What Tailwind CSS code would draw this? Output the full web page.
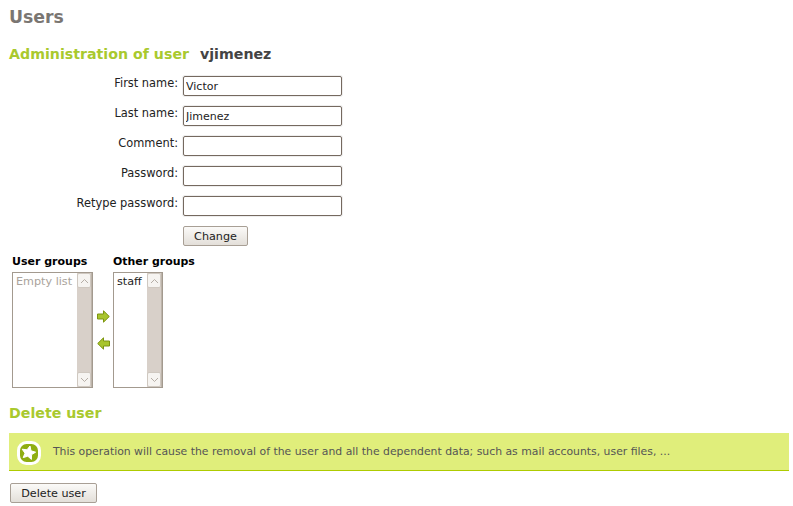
<!DOCTYPE html>
<html lang="en">
<head>
  <meta charset="UTF-8" />
  <title>Users</title>
  <script src="https://cdn.jsdelivr.net/npm/@tailwindcss/browser@4"></script>
</head>
<body class="bg-white font-['DejaVu_Sans',sans-serif] text-[11px] text-[#333] overflow-hidden">
  <div class="w-[793px] h-[506px] pl-[9px] pr-[4px] pt-[6px]">
    <h1 class="text-[17.3px] leading-[22px] font-bold text-[#7a7672]">Users</h1>

    <!-- Administration -->
    <h2 class="mt-[17px] h-[18px] flex items-center gap-[11px] text-[14.2px] leading-[18px] font-bold text-[#a9c92e]">
      <span>Administration of user</span><span class="text-[#444]">vjimenez</span>
    </h2>

    <form class="mt-[13px] ml-[-9px] flex flex-col gap-[10px]">
      <div class="flex items-start gap-[5px]">
        <label class="w-[178px] text-right text-[11.4px] leading-[14px] text-[#222]">First name:</label>
        <input value="Victor" class="w-[159px] h-[20px] bg-white border border-[#75695f] rounded-[2px] px-[2px] text-[11px] text-[#222] shadow-[0_0_0_1px_#eee]" />
      </div>
      <div class="flex items-start gap-[5px]">
        <label class="w-[178px] text-right text-[11.4px] leading-[14px] text-[#222]">Last name:</label>
        <input value="Jimenez" class="w-[159px] h-[20px] bg-white border border-[#75695f] rounded-[2px] px-[2px] text-[11px] text-[#222] shadow-[0_0_0_1px_#eee]" />
      </div>
      <div class="flex items-start gap-[5px]">
        <label class="w-[178px] text-right text-[11.4px] leading-[14px] text-[#222]">Comment:</label>
        <input class="w-[159px] h-[20px] bg-white border border-[#75695f] rounded-[2px] px-[2px] shadow-[0_0_0_1px_#eee]" />
      </div>
      <div class="flex items-start gap-[5px]">
        <label class="w-[178px] text-right text-[11.4px] leading-[14px] text-[#222]">Password:</label>
        <input type="password" class="w-[159px] h-[20px] bg-white border border-[#75695f] rounded-[2px] px-[2px] shadow-[0_0_0_1px_#eee]" />
      </div>
      <div class="flex items-start gap-[5px]">
        <label class="w-[178px] text-right text-[11.4px] leading-[14px] text-[#222]">Retype password:</label>
        <input type="password" class="w-[159px] h-[20px] bg-white border border-[#75695f] rounded-[2px] px-[2px] shadow-[0_0_0_1px_#eee]" />
      </div>
      <div class="pl-[183px]">
        <button type="button" class="w-[65px] h-[20px] pt-[2px] border border-[#a89f95] rounded-[2px] bg-gradient-to-b from-[#fbfaf8] to-[#e3dfd9] text-[11.2px] leading-[14px] text-[#222]">Change</button>
      </div>
    </form>

    <!-- Groups -->
    <div class="mt-[8px] ml-[3px] flex items-start">
      <div class="w-[80px]">
        <div class="h-[14px] pt-[1px] leading-[14px] font-bold text-black text-[11px]">User groups</div>
        <div class="mt-[4px] w-[81px] h-[116px] border border-[#a39a8f] flex bg-white">
          <div class="flex-1 pl-[3px] pt-[2px] text-[11.2px] leading-[14px] text-[#aaa39b]">Empty list</div>
          <div class="w-[15px] flex flex-col bg-[#d8d0c9] border-r border-[#bdb4aa]">
            <div class="h-[15px] bg-[#f6f4f1] border border-[#cfc8c0] rounded-[2px] flex items-center justify-center">
              <svg width="9" height="6" viewBox="0 0 9 6"><path d="M1 5L4.5 1.5L8 5" fill="none" stroke="#b5aea6"/></svg>
            </div>
            <div class="flex-1"></div>
            <div class="h-[15px] bg-[#f6f4f1] border border-[#cfc8c0] rounded-[2px] flex items-center justify-center">
              <svg width="9" height="6" viewBox="0 0 9 6"><path d="M1 1L4.5 4.5L8 1" fill="none" stroke="#b5aea6"/></svg>
            </div>
          </div>
        </div>
      </div>

      <div class="w-[21px] mt-[56px] flex flex-col items-center gap-[14px] pl-[1px]">
        <svg width="13" height="13" viewBox="0 0 13 13"><path d="M0.5 4H6.5V0.8L12.3 6.5L6.5 12.2V9H0.5Z" fill="#a8c52c" stroke="#7c9410"/></svg>
        <svg width="13" height="13" viewBox="0 0 13 13"><path d="M12.5 4H6.5V0.8L0.7 6.5L6.5 12.2V9H12.5Z" fill="#a8c52c" stroke="#7c9410"/></svg>
      </div>

      <div>
        <div class="h-[14px] pt-[1px] leading-[14px] font-bold text-black text-[10.95px]">Other groups</div>
        <div class="mt-[4px] w-[50px] h-[116px] border border-[#a39a8f] flex bg-white">
          <div class="flex-1 pl-[3px] pt-[2px] text-[11.2px] leading-[14px] text-[#222]">staff</div>
          <div class="w-[15px] flex flex-col bg-[#d8d0c9] border-r border-[#bdb4aa]">
            <div class="h-[15px] bg-[#f6f4f1] border border-[#cfc8c0] rounded-[2px] flex items-center justify-center">
              <svg width="9" height="6" viewBox="0 0 9 6"><path d="M1 5L4.5 1.5L8 5" fill="none" stroke="#b5aea6"/></svg>
            </div>
            <div class="flex-1"></div>
            <div class="h-[15px] bg-[#f6f4f1] border border-[#cfc8c0] rounded-[2px] flex items-center justify-center">
              <svg width="9" height="6" viewBox="0 0 9 6"><path d="M1 1L4.5 4.5L8 1" fill="none" stroke="#b5aea6"/></svg>
            </div>
          </div>
        </div>
      </div>
    </div>

    <!-- Delete -->
    <h2 class="mt-[16px] h-[18px] text-[14.2px] leading-[18px] font-bold text-[#a9c92e]">Delete user</h2>
    <div class="mt-[11px] h-[38px] bg-[#e0ee7b] border-b border-[#aecb00] flex items-center pl-[8px] gap-[12px] text-[#555]">
      <svg width="24" height="24" viewBox="0 0 24 24" class="shrink-0 mt-[2px]">
        <rect x="1.5" y="1.5" width="21" height="21" rx="8" fill="#8fae12" stroke="#fff" stroke-width="3"/>
        <path d="M13 5L14 9.8L18.6 11.2L14.6 13.6L14.4 18.4L10.8 15.2L6.2 16.6L8 12.2L5.2 8.2L10 8.8Z" fill="#fff" stroke="#fff" stroke-linejoin="round"/>
      </svg>
      <span class="text-[10.85px] pt-[2px]">This operation will cause the removal of the user and all the dependent data; such as mail accounts, user files, ...</span>
    </div>
    <button type="button" class="mt-[12px] ml-[1px] block w-[87px] h-[20px] pt-[2px] border border-[#a89f95] rounded-[2px] bg-gradient-to-b from-[#fbfaf8] to-[#e3dfd9] text-[11.2px] leading-[14px] text-[#222]">Delete user</button>
  </div>
</body>
</html>
